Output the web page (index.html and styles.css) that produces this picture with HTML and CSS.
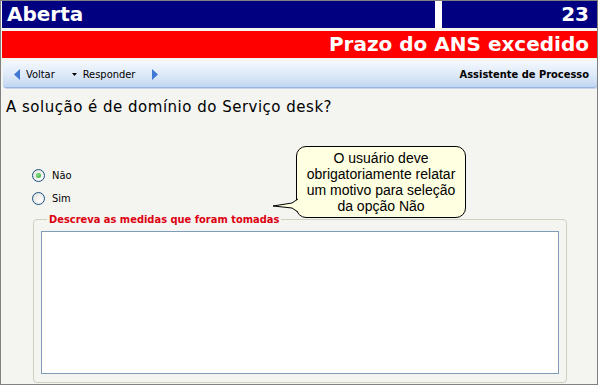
FILE: index.html
```html
<!DOCTYPE html>
<html>
  <head>
    <title>Assistente de Processo</title>
    <link rel="stylesheet" href="styles.css">
  </head>
  <body>
    <div class="window">
      <div class="status-row">
        <div class="status-panel status-main">Aberta</div>
        <div class="status-panel status-count">23</div>
      </div>
      <div class="alert-row">Prazo do ANS excedido</div>

      <div class="toolbar">
        <div class="tool">
          <svg width="6" height="11" viewBox="0 0 6 11"><path d="M6 0 L0 5.5 L6 11 Z" fill="#3f78d4"/></svg>
          <span>Voltar</span>
        </div>
        <div class="tool">
          <svg width="5" height="3" viewBox="0 0 5 3"><path d="M0 0 H5 L2.5 3 Z" fill="#000"/></svg>
          <span>Responder</span>
        </div>
        <div class="tool">
          <svg width="6" height="11" viewBox="0 0 6 11"><path d="M0 0 L6 5.5 L0 11 Z" fill="#3f78d4"/></svg>
        </div>
        <div class="toolbar-title">Assistente de Processo</div>
      </div>

      <div class="content">
        <p class="question">A solução é de domínio do Serviço desk?</p>

        <div class="options">
          <div class="option"><span class="radio checked"></span>Não</div>
          <div class="option"><span class="radio"></span>Sim</div>
        </div>

        <fieldset class="group">
          <legend>Descreva as medidas que foram tomadas</legend>
          <div class="memo"></div>
        </fieldset>

        <div class="balloon">
          <svg class="balloon-tail" width="26" height="16" viewBox="0 0 26 16">
            <path d="M25 2 L19 6 L0 9 L19 11 L25 15" fill="#ffffe1" stroke="#000" stroke-width="1"/>
          </svg>
          O usuário deve<br>
          obrigatoriamente relatar<br>
          um motivo para seleção<br>
          da opção Não
        </div>
      </div>
    </div>
  </body>
</html>
```

FILE: styles.css
```css
body {
  margin: 0;
  font-family: "DejaVu Sans Condensed", "Liberation Sans", sans-serif;
  font-size: 11px;
}

.window {
  width: 598px;
  height: 385px;
  box-sizing: border-box;
  border: 1px solid #808080;
  background: #f4f4f0;
  display: flex;
  flex-direction: column;
  overflow: hidden;
}

.status-row {
  display: flex;
  gap: 7px;
  padding-left: 1px;
  background: #fff;
}

.status-panel {
  height: 27px;
  background: #000080;
  color: #fff;
  font-family: "DejaVu Sans", sans-serif;
  font-weight: bold;
  font-size: 20px;
  line-height: 27px;
}

.status-main {
  width: 433px;
  padding-left: 5px;
  box-sizing: border-box;
}

.status-count {
  flex: 1;
  text-align: right;
  padding-right: 8px;
}

.alert-row {
  height: 27px;
  margin-top: 3px;
  margin-left: 1px;
  background: #ff0000;
  color: #fff;
  font-family: "DejaVu Sans", sans-serif;
  font-weight: bold;
  font-size: 20px;
  line-height: 27px;
  text-align: right;
  padding-right: 8px;
}

.toolbar {
  height: 26px;
  margin: 3px 0 0 2px;
  display: flex;
  align-items: center;
  padding: 0 8px 0 11px;
  background: linear-gradient(#f4f8fe, #dde9f8 55%, #c2d6f2);
  border-bottom: 1px solid #98b4de;
  border-radius: 0 0 4px 3px;
  box-shadow: 1px 1px 0 #c9d6ea;
}

.tool {
  display: flex;
  align-items: center;
  gap: 6px;
  margin-right: 17px;
  color: #000;
}

.toolbar-title {
  margin-left: auto;
  font-weight: bold;
}

.content {
  position: relative;
  flex: 1;
}

.question {
  margin: 11px 0 0 5px;
  font-family: "DejaVu Sans", sans-serif;
  font-size: 15px;
  letter-spacing: 0.5px;
  line-height: 17px;
}

.options {
  margin: 48px 0 0 31px;
}

.option {
  height: 23px;
  display: flex;
  align-items: center;
  gap: 7px;
}

.radio {
  width: 11px;
  height: 11px;
  border: 1px solid #1c5180;
  border-radius: 50%;
  background: radial-gradient(circle at 65% 65%, #fff, #dcdcd6);
  box-sizing: content-box;
  position: relative;
}

.radio.checked::after {
  content: "";
  position: absolute;
  left: 3px;
  top: 3px;
  width: 5px;
  height: 5px;
  border-radius: 50%;
  background: radial-gradient(circle at 40% 40%, #8ce08c, #21a121);
}

.group {
  margin: 3px 0 0 32px;
  width: 534px;
  height: 170px;
  box-sizing: border-box;
  padding: 0 7px 7px;
  border: 1px solid #d0d0bf;
  border-radius: 4px;
}

.group legend {
  margin-left: 6px;
  padding: 0 2px;
  color: #dd0010;
  font-weight: bold;
}

.memo {
  margin-top: 5px;
  height: 141px;
  background: #fff;
  border: 1px solid #7f9db9;
}

.balloon {
  position: absolute;
  left: 295px;
  top: 58px;
  width: 170px;
  height: 72px;
  box-sizing: border-box;
  padding-top: 3px;
  background: #ffffe1;
  border: 1px solid #000;
  border-radius: 10px;
  font-family: "Liberation Sans", sans-serif;
  font-size: 14px;
  line-height: 16px;
  text-align: center;
}

.balloon-tail {
  position: absolute;
  left: -24px;
  top: 50px;
}
```
